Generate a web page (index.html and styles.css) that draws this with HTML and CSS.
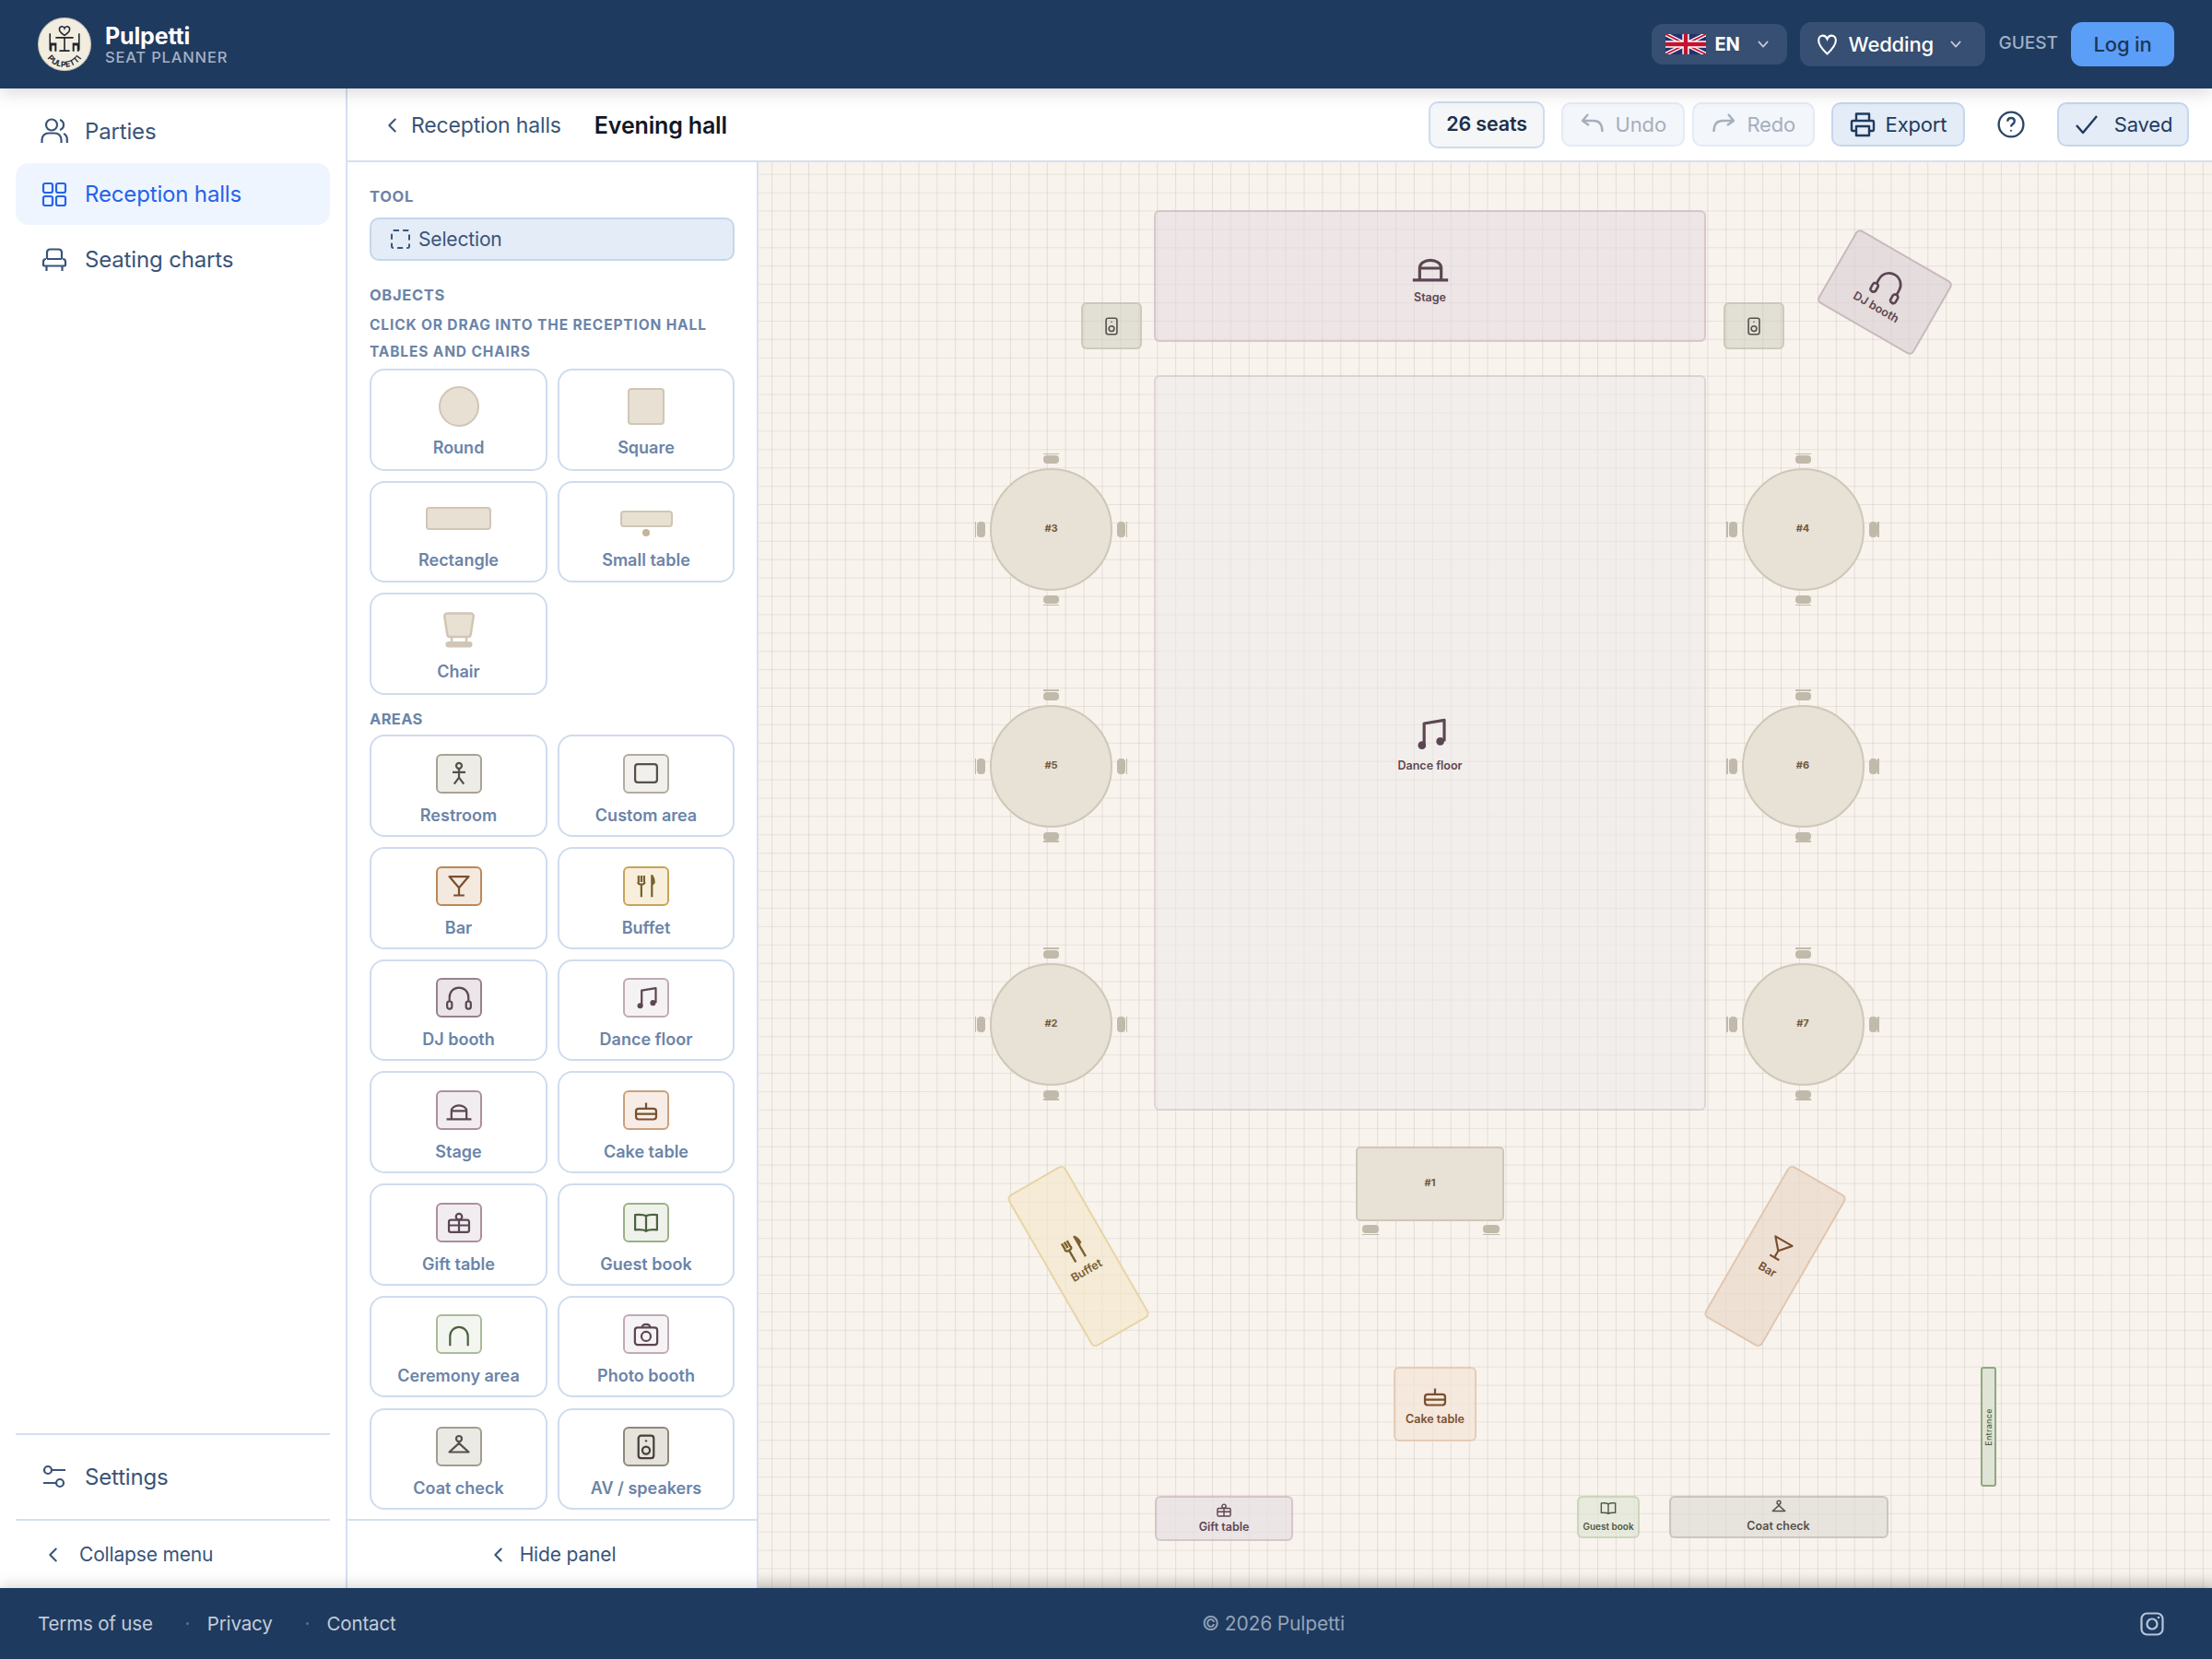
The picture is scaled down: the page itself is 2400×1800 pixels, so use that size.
FILE: index.html
```html
<!DOCTYPE html>
<html lang="en">
<head>
    <meta charset="UTF-8">
    <meta name="viewport" content="width=device-width, initial-scale=1.0">
    <title>Pulpetti Seat Planner</title>
    <link rel="stylesheet" href="styles.css">
</head>
<body>

<!-- icons used in the panel and on the canvas -->
<svg class="sprites" aria-hidden="true">
    <symbol id="i-person" viewBox="0 0 24 24"><circle cx="12" cy="5" r="2.6"/><path d="M6 11h12M12 7.6V16M7.5 22l4.5-6 4.5 6"/></symbol>
    <symbol id="i-rect" viewBox="0 0 24 24"><rect x="1.8" y="3.5" width="20.4" height="17" rx="2.5"/></symbol>
    <symbol id="i-glass" viewBox="0 0 24 24"><path d="M3 3.5h18L12 14zM12 14v7M7 21h10"/></symbol>
    <symbol id="i-food" viewBox="0 0 24 24"><path d="M5 2.5v6M7.6 2.5v6M10.2 2.5v6M4.6 8.5c0 1.6 1 2.3 3 2.3s3-.7 3-2.3M7.6 10v12.5M17.4 2v20.5"/><path class="solid" d="M17.4 2c2 1 3 4 3 7.5l-3 3z"/></symbol>
    <symbol id="i-phones" viewBox="0 0 24 24"><path d="M3.2 15v-4a8.8 8.8 0 0 1 17.6 0v4"/><rect x="1" y="15" width="4.4" height="7" rx="2"/><rect x="18.6" y="15" width="4.4" height="7" rx="2"/></symbol>
    <symbol id="i-music" viewBox="0 0 24 24"><path d="M7.9 19V4.800L21 2.600v13.700"/><circle class="solid" cx="6.5" cy="19" r="2.6"/><circle class="solid" cx="18.4" cy="16.4" r="2.6"/></symbol>
    <symbol id="i-stage" viewBox="0 0 24 24"><path d="M5 20.500V13a7 5 0 0 1 14 0v7.500M5 13.200h14M.5 20.900h23"/></symbol>
    <symbol id="i-cake" viewBox="0 0 24 24"><path d="M12 5.500V11M2.600 16h18.800"/><rect x="2.600" y="11" width="18.800" height="10" rx="2.500"/></symbol>
    <symbol id="i-gift" viewBox="0 0 24 24"><rect x="2.600" y="10" width="18.800" height="11.400" rx="1.800"/><circle cx="12" cy="7" r="2.800"/><path d="M12 10v11.400M2.600 15h18.800"/></symbol>
    <symbol id="i-book" viewBox="0 0 24 24"><path d="M12 6.500C10 5 6.500 4.800 1.800 5.200v14c4.700-.4 8.200-.2 10.200 1.300 2-1.500 5.500-1.700 10.200-1.300v-14C17.500 4.800 14 5 12 6.500zM12 6.500v14"/></symbol>
    <symbol id="i-arch" viewBox="0 0 24 24"><path d="M3.700 22.500v-9.200a8.300 8.300 0 0 1 16.600 0v9.200"/></symbol>
    <symbol id="i-camera" viewBox="0 0 24 24"><rect x="1.600" y="5.500" width="20.800" height="16" rx="2.500"/><path d="M8.300 5.500c0-2 1.200-3 3.700-3s3.700 1 3.700 3"/><circle cx="12" cy="13.700" r="4.300"/></symbol>
    <symbol id="i-hanger" viewBox="0 0 24 24"><circle cx="12" cy="4.300" r="2.600"/><path d="M12 7v1.500L3 16.700h18L12 8.500"/></symbol>
    <symbol id="i-speaker" viewBox="0 0 24 24"><rect x="4.900" y="1.400" width="14.200" height="21" rx="2.500"/><circle class="solid" cx="12" cy="6.300" r="1"/><circle cx="12" cy="15.100" r="3.500"/></symbol>
    <symbol id="i-chevron-left" viewBox="0 0 24 24"><path d="M15 5l-7 7 7 7"/></symbol>
    <symbol id="i-chevron-down" viewBox="0 0 24 24"><path d="M5 8l7 8 7-8"/></symbol>
</svg>

<header class="topbar">
    <div class="brand">
        <svg class="brand-logo" viewBox="0 0 57 57">
            <defs><path id="logo-curve" d="M6.500 31a22 22 0 0 0 44 0"/></defs>
            <circle cx="28.500" cy="28.500" r="28" fill="#f1ede1" stroke="#c9c3b2"/>
            <path d="M28.500 19c-3-2-5.500-3.500-5.500-6.500 0-3.500 4.500-4 5.500-1 1-3 5.500-2.500 5.500 1 0 3-2.500 4.500-5.500 6.500z" fill="none" stroke="#24262b" stroke-width="1.500"/>
            <path d="M19 21.500h19M28.500 21.500v14M23 35.500h11M13 17v18M44 17v18" fill="none" stroke="#24262b" stroke-width="1.600"/>
            <path d="M13 27h7v9h-2v-6h-3v6h-2zM37 27h7v9h-2v-6h-3v6h-2z" fill="#24262b"/>
            <text class="logo-text"><textPath href="#logo-curve" startOffset="50%" text-anchor="middle">PULPETTI</textPath></text>
        </svg>
        <div class="brand-text">
            <span class="brand-name">Pulpetti</span>
            <span class="brand-sub">SEAT PLANNER</span>
        </div>
    </div>
    <div class="topbar-right">
        <button class="top-select lang">
            <svg class="flag" viewBox="0 0 60 30">
                <rect width="60" height="30" fill="#22336b"/>
                <path d="M0 0l60 30M60 0L0 30" stroke="#fff" stroke-width="6"/>
                <path d="M0 0l60 30M60 0L0 30" stroke="#c8102e" stroke-width="2.500"/>
                <path d="M30 0v30M0 15h60" stroke="#fff" stroke-width="10"/>
                <path d="M30 0v30M0 15h60" stroke="#c8102e" stroke-width="6"/>
            </svg>
            <span class="lang-code">EN</span>
            <svg class="top-chevron"><use href="#i-chevron-down"/></svg>
        </button>
        <button class="top-select event">
            <svg class="heart" viewBox="0 0 24 24"><path d="M12 21.500C6 16 3 12 3 7.500 3 4.500 5 2.500 7.500 2.500c2 0 3.600 1.300 4.500 3.500.9-2.200 2.500-3.500 4.500-3.500C19 2.500 21 4.500 21 7.500c0 4.500-3 8.500-9 14z"/></svg>
            <span>Wedding</span>
            <svg class="top-chevron"><use href="#i-chevron-down"/></svg>
        </button>
        <span class="guest">GUEST</span>
        <button class="login">Log in</button>
    </div>
</header>

<main class="app">
    <aside class="sidebar">
        <nav class="nav">
            <a class="nav-item">
                <svg class="nav-icon" viewBox="0 0 30 28"><circle cx="12" cy="7.500" r="6"/><path d="M1.500 27v-3.500c0-4 3-7 7-7h7c4 0 7 3 7 7V27M21 2c2.500.8 4 3 4 5.500S23.500 12 21 13M25 17c2.500 1 3.800 3.500 3.800 6.500V27"/></svg>
                Parties
            </a>
            <a class="nav-item nav-active">
                <svg class="nav-icon" viewBox="0 0 28 28"><rect x="2" y="2" width="10" height="10" rx="2"/><rect x="16" y="2" width="10" height="10" rx="2"/><rect x="2" y="16" width="10" height="10" rx="2"/><rect x="16" y="16" width="10" height="10" rx="2"/></svg>
                Reception halls
            </a>
            <a class="nav-item">
                <svg class="nav-icon" viewBox="0 0 28 28"><path d="M6 13V6c0-2 1.500-3.500 3.500-3.500h9C20.500 2.500 22 4 22 6v7M6 13h16M5 13c-2 0-3 1.500-3 3v3c0 1 .8 1.500 1.500 1.500h21c.7 0 1.500-.5 1.500-1.500v-3c0-1.500-1-3-3-3M5.500 20.500V26M22.500 20.500V26"/></svg>
                Seating charts
            </a>
        </nav>
        <div class="sidebar-bottom">
            <a class="nav-item nav-settings">
                <svg class="nav-icon" viewBox="0 0 28 28"><circle cx="7" cy="6" r="4"/><circle cx="20" cy="20" r="4"/><path d="M11 6h15M2 20h14"/></svg>
                Settings
            </a>
            <a class="collapse">
                <svg class="chevron-sm"><use href="#i-chevron-left"/></svg>
                Collapse menu
            </a>
        </div>
    </aside>

    <section class="workspace">
        <div class="toolbar">
            <a class="crumb">
                <svg class="chevron-sm"><use href="#i-chevron-left"/></svg>
                Reception halls
            </a>
            <h1 class="hall-name">Evening hall</h1>
            <div class="toolbar-right">
                <span class="seats">26 seats</span>
                <button class="tool-btn is-disabled">
                    <svg class="btn-icon" viewBox="0 0 28 28"><path d="M9 3L3 10l7 5M3.500 10H15c6 0 9.500 4 9.500 12"/></svg>
                    Undo
                </button>
                <button class="tool-btn is-disabled">
                    <svg class="btn-icon" viewBox="0 0 28 28"><path d="M19 3l6 7-7 5M24.500 10H13c-6 0-9.500 4-9.500 12"/></svg>
                    Redo
                </button>
                <button class="tool-btn export">
                    <svg class="btn-icon print" viewBox="0 0 28 28"><path d="M7 10V2.500h14V10M7 21H3.500A1.500 1.500 0 0 1 2 19.500v-8A1.500 1.500 0 0 1 3.500 10h21a1.500 1.500 0 0 1 1.500 1.500v8a1.500 1.500 0 0 1-1.500 1.500H21"/><rect x="7" y="16" width="14" height="10"/></svg>
                    Export
                </button>
                <svg class="help" viewBox="0 0 28 28"><circle cx="14" cy="14" r="12.500"/><path d="M10.500 11c0-2.200 1.500-3.500 3.500-3.500s3.500 1.300 3.500 3.200c0 2.800-3.500 2.800-3.500 5.600"/><circle class="solid" cx="14" cy="20.300" r="1"/></svg>
                <button class="tool-btn saved">
                    <svg class="btn-icon check" viewBox="0 0 28 28"><path d="M3 15l7 8L25 5"/></svg>
                    Saved
                </button>
            </div>
        </div>

        <div class="editor">
            <aside class="panel">
                <div class="panel-body">
                    <div class="panel-title">TOOL</div>
                    <div class="selection">
                        <span class="dashed-icon"></span>
                        Selection
                    </div>
                    <div class="panel-title title-objects">OBJECTS</div>
                    <div class="panel-hint">CLICK OR DRAG INTO THE RECEPTION HALL</div>
                    <div class="panel-hint hint-tables">TABLES AND CHAIRS</div>
                    <div class="palette">
                        <button class="card"><span class="card-art"><span class="art-round"></span></span>Round</button>
                        <button class="card"><span class="card-art"><span class="art-square"></span></span>Square</button>
                        <button class="card"><span class="card-art"><span class="art-rect"></span></span>Rectangle</button>
                        <button class="card"><span class="card-art"><span class="art-small"></span><span class="art-dot"></span></span>Small table</button>
                        <button class="card"><span class="card-art">
                            <svg class="art-chair" viewBox="0 0 36 40"><path d="M6 1.500h24c3 0 4 1.500 3.700 3.500l-3 19.500c-.3 1.500-1.200 2.500-2.700 2.500H8c-1.500 0-2.400-1-2.700-2.500L2.300 5C2 3 3 1.500 6 1.500z" fill="#e8e0d2" stroke="#cfc6b5" stroke-width="2.500"/><path d="M10 27v6M26 27v6" stroke="#cfc6b5" stroke-width="2.500"/><rect x="3.500" y="32" width="29" height="6.500" rx="3" fill="#cfc6b5"/></svg>
                        </span>Chair</button>
                    </div>
                    <div class="panel-title title-areas">AREAS</div>
                    <div class="palette">
                        <button class="card"><span class="area-box a-rest"><svg class="ic"><use href="#i-person"/></svg></span>Restroom</button>
                        <button class="card"><span class="area-box a-custom"><svg class="ic"><use href="#i-rect"/></svg></span>Custom area</button>
                        <button class="card"><span class="area-box a-bar"><svg class="ic"><use href="#i-glass"/></svg></span>Bar</button>
                        <button class="card"><span class="area-box a-buffet"><svg class="ic"><use href="#i-food"/></svg></span>Buffet</button>
                        <button class="card"><span class="area-box a-dj"><svg class="ic"><use href="#i-phones"/></svg></span>DJ booth</button>
                        <button class="card"><span class="area-box a-dance"><svg class="ic"><use href="#i-music"/></svg></span>Dance floor</button>
                        <button class="card"><span class="area-box a-stage"><svg class="ic"><use href="#i-stage"/></svg></span>Stage</button>
                        <button class="card"><span class="area-box a-cake"><svg class="ic"><use href="#i-cake"/></svg></span>Cake table</button>
                        <button class="card"><span class="area-box a-stage"><svg class="ic"><use href="#i-gift"/></svg></span>Gift table</button>
                        <button class="card"><span class="area-box a-book"><svg class="ic"><use href="#i-book"/></svg></span>Guest book</button>
                        <button class="card"><span class="area-box a-arch"><svg class="ic"><use href="#i-arch"/></svg></span>Ceremony area</button>
                        <button class="card"><span class="area-box a-photo"><svg class="ic"><use href="#i-camera"/></svg></span>Photo booth</button>
                        <button class="card"><span class="area-box a-coat"><svg class="ic"><use href="#i-hanger"/></svg></span>Coat check</button>
                        <button class="card"><span class="area-box a-av"><svg class="ic"><use href="#i-speaker"/></svg></span>AV / speakers</button>
                    </div>
                </div>
                <a class="hide-panel">
                    <svg class="chevron-sm"><use href="#i-chevron-left"/></svg>
                    Hide panel
                </a>
            </aside>

            <div class="canvas">
                <div class="obj o-stage"><svg class="ic"><use href="#i-stage"/></svg><span>Stage</span></div>
                <div class="obj o-speaker o-sp-left"><svg class="ic"><use href="#i-speaker"/></svg></div>
                <div class="obj o-speaker o-sp-right"><svg class="ic"><use href="#i-speaker"/></svg></div>
                <div class="obj o-dj"><svg class="ic"><use href="#i-phones"/></svg><span>DJ booth</span></div>
                <div class="obj o-dance"><svg class="ic"><use href="#i-music"/></svg><span>Dance floor</span></div>

                <div class="table t-3">#3<i class="seat s-top"></i><i class="seat s-bottom"></i><i class="seat s-left"></i><i class="seat s-right"></i></div>
                <div class="table t-4">#4<i class="seat s-top"></i><i class="seat s-bottom"></i><i class="seat s-left"></i><i class="seat s-right"></i></div>
                <div class="table t-5">#5<i class="seat s-top"></i><i class="seat s-bottom"></i><i class="seat s-left"></i><i class="seat s-right"></i></div>
                <div class="table t-6">#6<i class="seat s-top"></i><i class="seat s-bottom"></i><i class="seat s-left"></i><i class="seat s-right"></i></div>
                <div class="table t-2">#2<i class="seat s-top"></i><i class="seat s-bottom"></i><i class="seat s-left"></i><i class="seat s-right"></i></div>
                <div class="table t-7">#7<i class="seat s-top"></i><i class="seat s-bottom"></i><i class="seat s-left"></i><i class="seat s-right"></i></div>
                <div class="table-rect">#1<i class="seat s-bottom s-b1"></i><i class="seat s-bottom s-b2"></i></div>

                <div class="obj o-buffet"><svg class="ic"><use href="#i-food"/></svg><span>Buffet</span></div>
                <div class="obj o-bar"><svg class="ic"><use href="#i-glass"/></svg><span>Bar</span></div>
                <div class="obj o-cake"><svg class="ic"><use href="#i-cake"/></svg><span>Cake table</span></div>
                <div class="obj o-gift"><svg class="ic"><use href="#i-gift"/></svg><span>Gift table</span></div>
                <div class="obj o-guest"><svg class="ic"><use href="#i-book"/></svg><span>Guest book</span></div>
                <div class="obj o-coat"><svg class="ic"><use href="#i-hanger"/></svg><span>Coat check</span></div>
                <div class="obj o-entrance"><span>Entrance</span></div>
            </div>
        </div>
    </section>
</main>

<footer class="footer">
    <div class="footer-links">
        <a>Terms of use</a><i class="dot"></i>
        <a>Privacy</a><i class="dot"></i>
        <a>Contact</a>
    </div>
    <div class="copyright">© 2026 Pulpetti</div>
    <svg class="insta" viewBox="0 0 26 26"><rect x="1.500" y="1.500" width="23" height="23" rx="6"/><circle cx="13" cy="13" r="5.500"/><circle class="solid" cx="20" cy="6" r="1.300"/></svg>
</footer>

</body>
</html>
```

FILE: styles.css
```css
* {
    box-sizing: border-box;
}

html, body {
    margin: 0;
    height: 100%;
}

body {
    display: flex;
    flex-direction: column;
    height: 1800px;
    overflow: hidden;
    font-family: Inter, "Open Sans", sans-serif;
    letter-spacing: -0.01em;
    color: #1f3a5f;
    background-color: #fff;
}

button {
    font-family: inherit;
    letter-spacing: inherit;
    cursor: pointer;
}

.sprites {
    display: none;
}

symbol {
    overflow: visible;
}

.solid {
    fill: currentColor;
    stroke: none;
}

/* TOP BAR */
.topbar {
    position: relative;
    z-index: 3;
    display: flex;
    justify-content: space-between;
    align-items: center;
    flex: 0 0 96px;
    padding: 0 41px 0 41px;
    background-color: #1f3a5f;
    box-shadow: 0 4px 18px rgba(0, 0, 0, 0.16);
}

.brand {
    display: flex;
    align-items: center;
    gap: 15px;
}

.brand-logo {
    width: 58px;
    height: 58px;
}

.logo-text {
    font-size: 8.500px;
    font-weight: 700;
    letter-spacing: 0.03em;
    fill: #24262b;
}

.brand-text {
    display: flex;
    flex-direction: column;
}

.brand-name {
    font-size: 25px;
    line-height: 28px;
    font-weight: 700;
    color: #fff;
}

.brand-sub {
    font-size: 16.500px;
    line-height: 18px;
    font-weight: 500;
    letter-spacing: 0.05em;
    color: #a3b1c4;
}

.topbar-right {
    display: flex;
    align-items: center;
}

.top-select {
    display: flex;
    align-items: center;
    height: 48px;
    border: none;
    border-radius: 12px;
    background-color: #364f72;
    color: #fff;
    font-size: 22px;
    font-weight: 500;
}

.lang {
    width: 147px;
    height: 44px;
    padding: 0 0 0 15px;
    margin-right: 14px;
}

.flag {
    width: 44px;
    height: 22px;
    margin-right: 10px;
}

.lang-code {
    font-size: 20px;
    font-weight: 700;
}

.lang .top-chevron {
    margin-left: 17px;
}

.event {
    width: 201px;
    padding: 0 0 0 17px;
    margin-right: 15px;
}

.heart {
    width: 25px;
    height: 25px;
    margin-right: 11px;
    fill: none;
    stroke: #fff;
    stroke-width: 2;
}

.event .top-chevron {
    margin-left: 16px;
}

.top-chevron {
    width: 16px;
    height: 16px;
    fill: none;
    stroke: #c2cdd9;
    stroke-width: 2.500;
    stroke-linecap: round;
    stroke-linejoin: round;
}

.guest {
    font-size: 19px;
    font-weight: 500;
    color: #9fb0c5;
    letter-spacing: 0;
    margin-right: 14px;
    margin-top: -4px;
}

.login {
    width: 112px;
    height: 48px;
    border: none;
    border-radius: 12px;
    background-color: #5b9ef7;
    color: #1c3557;
    font-size: 22px;
    font-weight: 500;
}

/* MAIN LAYOUT */
.app {
    display: flex;
    flex: 1;
    min-height: 0;
}

.sidebar {
    display: flex;
    flex-direction: column;
    justify-content: space-between;
    flex: 0 0 377px;
    padding: 0 17px;
    border-right: 2px solid #d5e0ef;
}

.nav {
    display: flex;
    flex-direction: column;
    padding-top: 12.500px;
}

.nav-item {
    display: flex;
    align-items: center;
    gap: 18px;
    height: 67px;
    padding-left: 27px;
    font-size: 24px;
    color: #3a5478;
}

.nav-active {
    margin: 1.500px 0 4px;
    border-radius: 14px;
    background-color: #eff5ff;
    color: #2563eb;
}

.nav-icon {
    width: 30px;
    height: 28px;
    fill: none;
    stroke: currentColor;
    stroke-width: 2.200;
}

.sidebar-bottom {
    display: flex;
    flex-direction: column;
}

.nav-settings {
    height: 95px;
    border-top: 2px solid #d5e0ef;
    border-bottom: 2px solid #d5e0ef;
}

.collapse {
    display: flex;
    align-items: center;
    gap: 17px;
    height: 73px;
    padding-left: 30px;
    font-size: 21px;
    color: #3a5478;
}

.chevron-sm {
    width: 22px;
    height: 22px;
    fill: none;
    stroke: currentColor;
    stroke-width: 2.200;
    stroke-linecap: round;
    stroke-linejoin: round;
}

.workspace {
    display: flex;
    flex-direction: column;
    flex: 1;
    min-width: 0;
}

/* TOOLBAR */
.toolbar {
    display: flex;
    align-items: center;
    flex: 0 0 80px;
    padding: 0 25px 0 38px;
    border-bottom: 2px solid #d5e0ef;
}

.crumb {
    display: flex;
    align-items: center;
    gap: 9px;
    margin-top: 1px;
    font-size: 23px;
    color: #3a5478;
}

.hall-name {
    margin: 1px 0 0 36px;
    font-size: 25px;
    font-weight: 600;
    color: #111827;
}

.toolbar-right {
    display: flex;
    align-items: center;
    margin-left: auto;
}

.seats {
    display: flex;
    align-items: center;
    justify-content: center;
    width: 126px;
    height: 51px;
    margin-right: 18px;
    padding-bottom: 3px;
    border: 2px solid #cddcf0;
    border-radius: 10px;
    background-color: #f5f6f8;
    font-size: 21.500px;
    font-weight: 600;
    color: #1c2f4a;
}

.tool-btn {
    display: flex;
    align-items: center;
    justify-content: center;
    gap: 11px;
    height: 48px;
    border: 2px solid #c6d6ec;
    border-radius: 10px;
    background-color: #e3ecf7;
    font-size: 22px;
    font-weight: 400;
    color: #1f3a5f;
}

.is-disabled {
    width: 133.500px;
    margin-right: 8px;
    border-color: #e4ebf5;
    background-color: #f3f6fb;
    color: #a6afbb;
}

.export {
    width: 145px;
    margin-left: 10px;
}

.btn-icon {
    width: 28px;
    height: 28px;
    fill: none;
    stroke: currentColor;
    stroke-width: 2.400;
    stroke-linejoin: round;
}

.help {
    width: 30px;
    height: 30px;
    margin: 0 35px 0 35px;
    fill: none;
    stroke: #2c4768;
    stroke-width: 2.200;
    color: #2c4768;
}

.saved {
    width: 143px;
    gap: 16px;
}

/* LEFT PANEL */
.editor {
    display: flex;
    flex: 1;
    min-height: 0;
}

.panel {
    display: flex;
    flex-direction: column;
    flex: 0 0 444px;
    border-right: 2px solid #d5e0ef;
}

.panel-body {
    flex: 1;
    padding: 27px 24px 0 24px;
    border-bottom: 2px solid #d5e0ef;
}

.panel-title {
    font-size: 16.500px;
    line-height: 20px;
    font-weight: 700;
    letter-spacing: 0.04em;
    color: #6b84a8;
}

.selection {
    display: flex;
    align-items: center;
    gap: 9px;
    height: 47px;
    margin-top: 13px;
    padding-left: 21px;
    border: 2px solid #c6d6ec;
    border-radius: 10px;
    background-color: #e3ecf7;
    font-size: 21px;
    color: #3a5478;
}

.dashed-icon {
    width: 21px;
    height: 21px;
    border: 2px dashed #3a5478;
    border-radius: 3px;
}

.title-objects {
    margin-top: 27px;
}

.panel-hint {
    margin-top: 13px;
    font-size: 15.500px;
    line-height: 20px;
    font-weight: 700;
    letter-spacing: 0.055em;
    white-space: nowrap;
    color: #6b84a8;
}

.hint-tables {
    margin-top: 9px;
}

.palette {
    display: grid;
    grid-template-columns: 193px 192px;
    column-gap: 11px;
    row-gap: 11.200px;
    margin-top: 8px;
}

.title-areas {
    margin-top: 16.500px;
    letter-spacing: 0.02em;
}

.title-areas + .palette {
    margin-top: 7px;
}

.card {
    display: flex;
    flex-direction: column;
    align-items: center;
    height: 110.500px;
    padding: 19px 0 0;
    border: 2px solid #cfdcee;
    border-radius: 16px;
    background-color: #fff;
    font-size: 18px;
    font-weight: 600;
    letter-spacing: 0;
    color: #6b84a8;
}

.card-art {
    display: flex;
    flex-direction: column;
    align-items: center;
    justify-content: center;
    height: 43px;
    margin-top: -1.500px;
    margin-bottom: 12.500px;
}

.art-round, .art-square, .art-rect, .art-small {
    display: block;
    border: 2.500px solid #cfc6b5;
    background-color: #e8e0d2;
}

.art-round {
    width: 44px;
    height: 44px;
    flex: none;
    border-radius: 50%;
}

.art-square {
    width: 40px;
    height: 40px;
    border-radius: 4px;
}

.art-rect {
    width: 71px;
    height: 25px;
    border-radius: 4px;
}

.art-small {
    width: 57px;
    height: 18px;
    margin-top: 10px;
    border-radius: 4px;
}

.art-dot {
    width: 8px;
    height: 8px;
    margin-top: 2px;
    border-radius: 50%;
    background-color: #c4b49c;
}

.art-chair {
    width: 36px;
    height: 40px;
}

.area-box {
    display: flex;
    align-items: center;
    justify-content: center;
    width: 50px;
    height: 43px;
    margin-top: -0.500px;
    margin-bottom: 13px;
    border: 2.500px solid;
    border-radius: 6px;
}

.ic {
    display: block;
    width: 28px;
    height: 28px;
    fill: none;
    stroke: currentColor;
    stroke-width: 1.900;
    stroke-linejoin: round;
}

.a-rest { border-color: #a8a294; background-color: #edece6; color: #55504a; }
.a-custom { border-color: #b2ac9f; background-color: #f1f0ec; color: #55504a; }
.a-bar { border-color: #bb8857; background-color: #f3e9df; color: #7a4f30; }
.a-buffet { border-color: #c9a356; background-color: #f7efdc; color: #7a6030; }
.a-dj { border-color: #97818c; background-color: #ebe4e8; color: #5c4652; }
.a-dance { border-color: #bfaab5; background-color: #f5f2f3; color: #5c4652; }
.a-stage { border-color: #ab8f9f; background-color: #f1ecf0; color: #5c4652; }
.a-cake { border-color: #c9a07c; background-color: #f7ede6; color: #7a5030; }
.a-book { border-color: #9cb088; background-color: #eef2ea; color: #4e6040; }
.a-arch { border-color: #a8bb98; background-color: #f3f6f0; color: #4e6040; }
.a-photo { border-color: #c0aab6; background-color: #f6f3f5; color: #5c4652; }
.a-coat { border-color: #a39c8f; background-color: #ebe9e4; color: #55504a; }
.a-av { border-color: #8f887a; background-color: #e6e3dc; color: #45403a; }

.hide-panel {
    display: flex;
    align-items: center;
    justify-content: center;
    gap: 12px;
    flex: 0 0 73px;
    font-size: 21px;
    color: #3a5478;
}

/* CANVAS */
.canvas {
    position: relative;
    flex: 1;
    overflow: hidden;
    background-color: #f8f3ed;
    background-image:
        linear-gradient(to top, rgba(60, 50, 40, 0.1), rgba(60, 50, 40, 0) 18px),
        linear-gradient(to right, rgba(105, 100, 85, 0.15) 1.400px, transparent 1.400px),
        linear-gradient(to bottom, rgba(105, 100, 85, 0.12) 1.400px, transparent 1.400px);
    background-size: 100% 100%, 19.920px 19.920px, 19.920px 19.920px;
    background-position: 0 0, 14.200px 12.700px, 14.200px 12.700px;
}

.obj, .table, .table-rect {
    position: absolute;
    display: flex;
    flex-direction: column;
    align-items: center;
    justify-content: center;
    letter-spacing: 0;
}

.obj {
    border: 2px solid;
    border-radius: 6px;
    font-size: 12.500px;
    font-weight: 600;
}

.o-stage {
    left: 429px;
    top: 52px;
    width: 599px;
    height: 143px;
    border-color: rgba(190, 165, 175, 0.45);
    background-color: rgba(228, 217, 224, 0.55);
    color: #5c4652;
}

.o-stage .ic {
    width: 40px;
    height: 40px;
    margin-bottom: 6px;
}

.o-speaker {
    top: 152px;
    width: 66px;
    height: 51px;
    border-color: rgba(175, 172, 155, 0.4);
    background-color: rgba(208, 206, 191, 0.55);
    color: #55504a;
}

.o-speaker .ic {
    width: 20px;
    height: 20px;
}

.o-sp-left { left: 350px; }
.o-sp-right { left: 1047px; }

.o-dj {
    left: 1162px;
    top: 95px;
    width: 120px;
    height: 92px;
    transform: rotate(30deg);
    border-color: rgba(175, 150, 160, 0.5);
    background-color: rgba(220, 209, 214, 0.7);
    color: #5c4652;
}

.o-dj .ic {
    width: 34px;
    height: 34px;
    margin-bottom: 2px;
}

.o-dance {
    left: 429px;
    top: 231px;
    width: 599px;
    height: 798px;
    padding-top: 3px;
    border-color: rgba(190, 165, 175, 0.35);
    background-color: rgba(237, 234, 233, 0.55);
    color: #5c4652;
}

.o-dance .ic {
    width: 40px;
    height: 40px;
    margin-bottom: 6px;
}

.table, .table-rect {
    z-index: 1;
    border: 2px solid #cfc7b8;
    background-color: #e8e1d5;
    font-size: 11px;
    font-weight: 700;
    color: #6e5a3e;
}

.table {
    width: 133px;
    height: 133px;
    border-radius: 50%;
    padding-bottom: 3px;
}

.t-3 { left: 251px; top: 332px; }
.t-4 { left: 1066.500px; top: 332px; }
.t-5 { left: 251px; top: 588.500px; }
.t-6 { left: 1066.500px; top: 588.500px; }
.t-2 { left: 251px; top: 868.500px; }
.t-7 { left: 1066.500px; top: 868.500px; }

.table-rect {
    left: 648px;
    top: 1068px;
    width: 161px;
    height: 81px;
    border-radius: 5px;
    padding-bottom: 3px;
}

/* chair: pill with a thin back line on the outer side */
.seat {
    position: absolute;
    border-radius: 4px;
    background-color: #c1baaa;
}

.seat::after {
    content: "";
    position: absolute;
    background-color: #c1baaa;
}

.s-top, .s-bottom {
    left: 50%;
    width: 17px;
    height: 9px;
    margin-left: -8.500px;
}

.s-left, .s-right {
    top: 50%;
    width: 9px;
    height: 17px;
    margin-top: -8.500px;
}

.s-top { top: -16px; }
.s-bottom { bottom: -16px; }
.s-left { left: -16px; }
.s-right { right: -16px; }

.s-top::after { left: 0; right: 0; top: -2.200px; height: 1.400px; }
.s-bottom::after { left: 0; right: 0; bottom: -2.200px; height: 1.400px; }
.s-left::after { top: 0; bottom: 0; left: -2.200px; width: 1.400px; }
.s-right::after { top: 0; bottom: 0; right: -2.200px; width: 1.400px; }

.table-rect .s-b1 { left: 5px; width: 18px; margin-left: 0; bottom: -15px; }
.table-rect .s-b2 { left: auto; right: 3px; width: 18px; margin-left: 0; bottom: -15px; }

.o-buffet {
    left: 310.500px;
    top: 1091.500px;
    width: 72px;
    height: 190px;
    transform: rotate(-30deg);
    border-color: rgba(225, 205, 150, 0.75);
    background-color: rgba(244, 231, 204, 0.7);
    color: #7a6030;
}

.o-buffet .ic {
    width: 30px;
    height: 30px;
    margin-bottom: 4px;
}

.o-bar {
    left: 1067px;
    top: 1091.500px;
    width: 72px;
    height: 190px;
    transform: rotate(30deg);
    border-color: rgba(220, 190, 165, 0.75);
    background-color: rgba(234, 216, 201, 0.7);
    color: #7a4f30;
}

.o-bar .ic {
    width: 28px;
    height: 28px;
    margin-bottom: 4px;
}

.o-cake {
    left: 689px;
    top: 1307px;
    width: 90px;
    height: 81px;
    border-color: rgba(225, 195, 170, 0.75);
    background-color: rgba(243, 226, 214, 0.7);
    color: #7a5030;
}

.o-cake .ic {
    width: 28px;
    height: 28px;
    margin-bottom: 4px;
}

.o-gift {
    left: 430px;
    top: 1447px;
    width: 150px;
    height: 49px;
    padding-bottom: 3px;
    border-color: rgba(190, 165, 175, 0.5);
    background-color: rgba(231, 222, 226, 0.7);
    color: #5c4652;
}

.o-gift .ic {
    width: 18px;
    height: 18px;
    margin-bottom: 2px;
}

.o-guest {
    left: 888px;
    top: 1447px;
    width: 68px;
    height: 46px;
    padding-bottom: 3px;
    font-size: 10px;
    border-color: rgba(175, 195, 155, 0.5);
    background-color: rgba(223, 230, 213, 0.7);
    color: #4e5a45;
}

.o-guest .ic {
    width: 18px;
    height: 18px;
    margin-bottom: 5px;
}

.o-coat {
    left: 987.500px;
    top: 1447px;
    width: 238px;
    height: 46px;
    padding-bottom: 2px;
    border-color: rgba(170, 165, 150, 0.45);
    background-color: rgba(223, 220, 213, 0.7);
    color: #55504a;
}

.o-coat .ic {
    width: 18px;
    height: 18px;
    margin-bottom: 3px;
}

.o-entrance {
    left: 1326px;
    top: 1307px;
    width: 17px;
    height: 130px;
    border-color: #8fa880;
    border-radius: 3px;
    background-color: #dfe4d6;
    color: #4e6040;
}

.o-entrance span {
    font-size: 9px;
    font-weight: 500;
    letter-spacing: 0.03em;
    white-space: nowrap;
    transform: rotate(-90deg);
}

/* FOOTER */
.footer {
    position: relative;
    z-index: 3;
    display: flex;
    align-items: center;
    flex: 0 0 77px;
    padding: 0 52px 0 41px;
    background-color: #1f3a5f;
    box-shadow: 0 -4px 14px rgba(0, 0, 0, 0.14);
}

.footer-links {
    display: flex;
    align-items: center;
    font-size: 20.500px;
    color: #c2cdd9;
}

.dot {
    width: 3px;
    height: 3px;
    margin: 0 20px 0 36px;
    border-radius: 50%;
    background-color: #5a7090;
}

.copyright {
    position: absolute;
    left: 1304px;
    font-size: 21px;
    color: #93a4b9;
}

.insta {
    width: 26px;
    height: 26px;
    margin-left: auto;
    fill: none;
    stroke: #b8c6d8;
    stroke-width: 2.200;
    color: #b8c6d8;
}
```
